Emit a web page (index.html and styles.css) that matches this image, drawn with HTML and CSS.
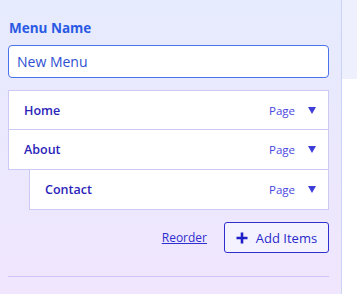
FILE: index.html
```html
<!DOCTYPE html>
<html>
<head>
<meta charset="utf-8">
<link rel="stylesheet" href="styles.css">
</head>
<body>
<div class="wrap">
  <div class="panel">
    <label class="label">Menu Name</label>
    <input class="name-input" type="text" value="New Menu">
    <div class="items">
      <div class="item">
        <span class="item-name">Home</span>
        <span class="item-type">Page</span>
        <span class="caret"></span>
      </div>
      <div class="item">
        <span class="item-name">About</span>
        <span class="item-type">Page</span>
        <span class="caret"></span>
      </div>
      <div class="item child">
        <span class="item-name">Contact</span>
        <span class="item-type">Page</span>
        <span class="caret"></span>
      </div>
    </div>
    <div class="actions">
      <a class="reorder" href="#">Reorder</a>
      <button class="add-btn">
        <svg class="plus" width="12" height="12" viewBox="0 0 12 12"><path d="M6 0.5v11M0.5 6h11" stroke="currentColor" stroke-width="2.6"/></svg>
        <span>Add Items</span>
      </button>
    </div>
    <div class="divider"></div>
  </div>
  <div class="side"></div>
</div>
</body>
</html>
```
FILE: styles.css
```css
html, body {
  margin: 0;
  padding: 0;
  background: #ffffff;
  font-family: "Open Sans", "Noto Sans", sans-serif;
}
.wrap {
  display: flex;
  align-items: flex-start;
}
.panel {
  width: 342px;
  height: 294px;
  box-sizing: border-box;
  padding: 19px 12px 0 8px;
  background: linear-gradient(180deg, #e6ebfd 0%, #ebe8fd 50%, #f0e6fd 100%);
  border-right: 1px solid #cbd3f6;
  display: flex;
  flex-direction: column;
}
.label {
  font-size: 13.5px;
  font-weight: 700;
  color: #2a5ae4;
  line-height: 18px;
  padding-left: 1px;
}
.name-input {
  margin-top: 8px;
  width: 321px;
  height: 33px;
  box-sizing: border-box;
  border: 1px solid #4a72ea;
  border-radius: 4px;
  background: #fff;
  padding: 0 8px;
  font-family: inherit;
  font-size: 14px;
  color: #2e4fd2;
  outline: none;
}
.items {
  margin-top: 12px;
  width: 321px;
  display: flex;
  flex-direction: column;
}
.item {
  display: flex;
  align-items: center;
  height: 41px;
  box-sizing: border-box;
  background: #fff;
  border: 1px solid #cdc9f5;
  margin-top: -1px;
  padding: 0 12px 0 15px;
}
.item:first-child { margin-top: 0; height: 40px; }
.item.child {
  margin-left: 21px;
}
.item-name {
  flex: 1;
  font-size: 12.5px;
  font-weight: 600;
  color: #2b25b8;
}
.item-type {
  font-size: 11.5px;
  color: #4a45e0;
  margin-right: 13px;
}
.caret {
  width: 0;
  height: 0;
  border-left: 4.5px solid transparent;
  border-right: 4.5px solid transparent;
  border-top: 7px solid #3f3ed8;
}
.actions {
  margin-top: 12px;
  width: 321px;
  display: flex;
  justify-content: flex-end;
  align-items: center;
  gap: 17px;
}
.reorder {
  font-size: 12px;
  color: #2e2fd0;
  text-decoration: underline;
}
.add-btn {
  height: 31px;
  width: 105px;
  box-sizing: border-box;
  border: 1px solid #2f2fd0;
  border-radius: 3px;
  background: #f4f2fe;
  color: #2a2acb;
  font-family: inherit;
  font-size: 13px;
  display: flex;
  align-items: center;
  justify-content: center;
  gap: 8px;
  padding: 0;
}
.plus { color: #1f1fc8; }
.divider {
  margin-top: 23px;
  width: 321px;
  height: 1px;
  background: #cfc2f5;
}
.side {
  width: 15px;
  height: 79px;
  background: #eef1fd;
}
```
